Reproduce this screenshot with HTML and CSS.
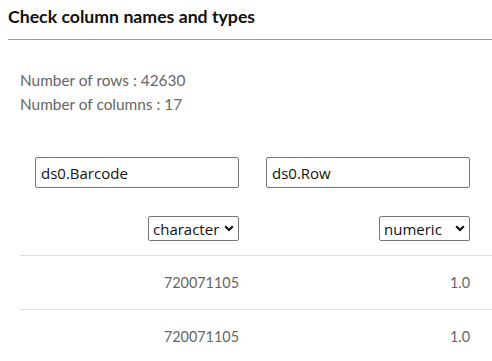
FILE: index.html
```html
<!DOCTYPE html>
<html lang="en">
<head>
    <meta charset="UTF-8">
    <meta name="viewport" content="width=device-width, initial-scale=1.0">
    <title>Check column names and types</title>
    <link rel="stylesheet" href="styles.css">
</head>
<body>
    <h4 class="title">Check column names and types</h4>
    <div class="rule"></div>

    <div class="info">
        <p>Number of rows : 42630</p>
        <p>Number of columns : 17</p>
    </div>

    <div class="col-table">
        <div class="row names">
            <div class="cell"><input type="text" class="name-input" value="ds0.Barcode"></div>
            <div class="cell"><input type="text" class="name-input" value="ds0.Row"></div>
        </div>
        <div class="row types">
            <div class="cell">
                <span class="select-wrap">
                    <select class="type-select">
                        <option selected>character</option>
                        <option>numeric</option>
                    </select>
                    <svg class="chevron" width="10" height="7" viewBox="0 0 10 7"><path d="M1.2 1.2 L5 5 L8.8 1.2" fill="none" stroke="#111" stroke-width="2.2"/></svg>
                </span>
            </div>
            <div class="cell">
                <span class="select-wrap">
                    <select class="type-select">
                        <option>character</option>
                        <option selected>numeric</option>
                    </select>
                    <svg class="chevron" width="10" height="7" viewBox="0 0 10 7"><path d="M1.2 1.2 L5 5 L8.8 1.2" fill="none" stroke="#111" stroke-width="2.2"/></svg>
                </span>
            </div>
        </div>
        <div class="row data">
            <div class="cell num">720071105</div>
            <div class="cell num">1.0</div>
        </div>
        <div class="row data">
            <div class="cell num">720071105</div>
            <div class="cell num">1.0</div>
        </div>
    </div>
</body>
</html>
```

FILE: styles.css
```css
* {
    margin: 0;
    padding: 0;
    box-sizing: border-box;
}
body {
    padding-left: 8px;
    font-family: 'Lato', 'Noto Sans', sans-serif;
    color: #666;
    background: #fff;
    overflow: hidden;
}
.title {
    padding-top: 6px;
    font-size: 17.7px;
    line-height: 22px;
    font-weight: bold;
    color: #111;
}
.rule {
    height: 1px;
    margin-top: 11px;
    background: #6aa8c8;
}
.info {
    margin-top: 28px;
    padding-left: 12px;
    font-size: 15.4px;
    line-height: 24px;
}
.col-table {
    margin-top: 41px;
    margin-left: 12px;
}
.row {
    display: flex;
    gap: 27px;
    padding-left: 15px;
}
.cell {
    width: 204px;
}
.names .cell input {
    width: 100%;
}
.name-input {
    height: 31px;
    padding: 0 5px;
    border: 1px solid #767676;
    border-radius: 2px;
    font-family: 'Open Sans', sans-serif;
    font-size: 15px;
    color: #111;
}
.types {
    padding-top: 28px;
    padding-bottom: 14px;
    border-bottom: 1px solid #ddd;
}
.types .cell {
    display: flex;
    justify-content: flex-end;
}
.select-wrap {
    position: relative;
    display: inline-block;
}
.type-select {
    appearance: none;
    display: block;
    width: 91px;
    height: 25px;
    padding: 0 0 0 4px;
    border: 1px solid #767676;
    border-radius: 2px;
    background: #fff;
    font-family: 'Open Sans', sans-serif;
    font-size: 15px;
    color: #111;
}
.chevron {
    position: absolute;
    right: 5px;
    top: 9px;
}
.data {
    height: 54px;
    align-items: center;
    border-bottom: 1px solid #ddd;
}
.num {
    text-align: right;
    font-size: 14.4px;
}
```
